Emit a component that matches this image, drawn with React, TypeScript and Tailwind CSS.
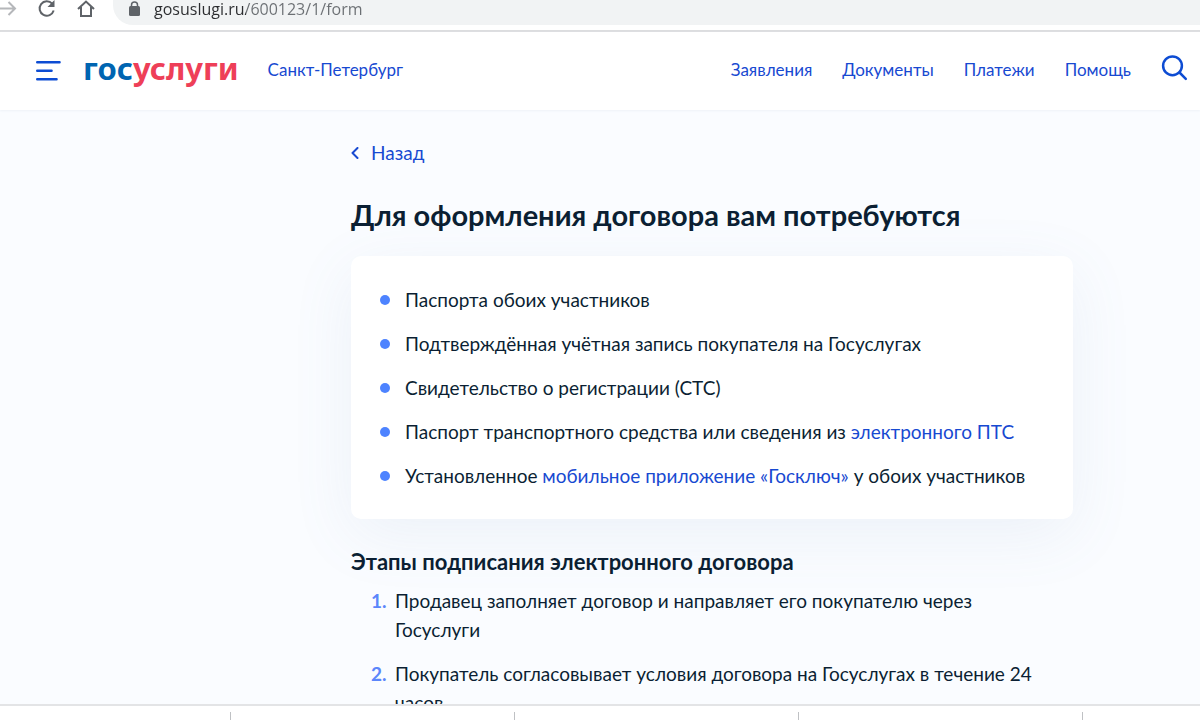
import type { ReactNode } from 'react'

const navLinks = ['Заявления', 'Документы', 'Платежи', 'Помощь']

const requirements: ReactNode[] = [
  'Паспорта обоих участников',
  'Подтверждённая учётная запись покупателя на Госуслугах',
  'Свидетельство о регистрации (СТС)',
  <>
    Паспорт транспортного средства или сведения из{' '}
    <a href="#epts" className="text-[#1749d1]">электронного ПТС</a>
  </>,
  <>
    Установленное{' '}
    <a href="#goskey" className="text-[#1749d1]">мобильное приложение «Госключ»</a>{' '}
    у обоих участников
  </>,
]

const steps = [
  'Продавец заполняет договор и направляет его покупателю через Госуслуги',
  'Покупатель согласовывает условия договора на Госуслугах в течение 24 часов',
]

function BrowserBar() {
  return (
    <div className="flex h-8 shrink-0 items-start border-b-2 border-[#dcdddf] bg-white">
      <button type="button" aria-label="Вперёд" className="w-[36px] text-[#b5b7ba]">
        <svg width="18" height="18" viewBox="0 0 18 18" fill="none" stroke="currentColor" strokeWidth="2">
          <path d="M0 8.500H14.500M8.500 2l6.500 6.500L8.500 15" />
        </svg>
      </button>
      <button type="button" aria-label="Обновить" className="w-[40px] text-[#5f6368]">
        <svg width="22" height="18" viewBox="0 0 22 18" fill="none" stroke="currentColor" strokeWidth="2">
          <path d="M16.200 3.700A7.200 7.200 0 1 0 17.700 10.500" />
          <path d="M18.500 0v7h-7z" fill="currentColor" stroke="none" />
        </svg>
      </button>
      <button type="button" aria-label="Домой" className="w-[37px] text-[#5f6368]">
        <svg width="20" height="18" viewBox="0 0 20 18" fill="none" stroke="currentColor" strokeWidth="2">
          <path d="M2 9L10 1.500 18 9M5 7v9h10V7" />
        </svg>
      </button>
      <div className="flex h-[25px] flex-1 items-start rounded-bl-[20px] bg-[#f1f3f4] pl-4">
        <svg className="mt-px shrink-0 text-[#5f6368]" width="11" height="15" viewBox="0 0 11 15" fill="none">
          <rect y="5" width="11" height="10" rx="1.500" fill="currentColor" />
          <path d="M2.500 6V4a3 3 0 0 1 6 0v2" stroke="currentColor" strokeWidth="1.500" />
        </svg>
        <input
          type="text"
          aria-label="Адресная строка"
          defaultValue="gosuslugi.ru/600123/1/form"
          className="ml-3.5 h-[18px] flex-1 box-content pb-1 bg-[linear-gradient(90deg,#2b2c2f_92px,#6b6f73_92px)] bg-clip-text font-['Open_Sans',sans-serif] text-[16px] leading-[18px] text-transparent outline-none"
        />
      </div>
    </div>
  )
}

function SiteHeader() {
  return (
    <header className="flex h-[78px] shrink-0 items-center bg-white pr-3 pb-0.5 pl-9 shadow-[0_1px_2px_#eef2f8]">
      <button type="button" aria-label="Меню" className="pt-0.5 text-[#0d4cd3]">
        <svg width="25" height="20" viewBox="0 0 25 20" fill="none" stroke="currentColor" strokeWidth="2.400" strokeLinecap="round">
          <path d="M1.200 1.200h22.400M1.200 9.700h14.400M1.200 18.300h19.400" />
        </svg>
      </button>
      <a href="#home" className="ml-[22px] pb-1 font-['Noto_Sans',sans-serif] text-[31px] leading-9 font-bold text-[#0065b1]">
        гос<span className="text-[#ee3f58]">услуги</span>
      </a>
      <a href="#region" className="ml-[29px] text-[17px] text-[#1749d1]">Санкт-Петербург</a>
      <nav className="ml-auto flex gap-[30px] text-[17px] text-[#1749d1]">
        {navLinks.map((link) => (
          <a key={link} href="#nav">{link}</a>
        ))}
      </nav>
      <button type="button" aria-label="Поиск" className="ml-[30px] pb-1 text-[#0d4cd3]">
        <svg width="27" height="26" viewBox="0 0 27 26" fill="none" stroke="currentColor" strokeWidth="2.500" strokeLinecap="round">
          <circle cx="11.500" cy="10.800" r="9.400" />
          <path d="M18.500 17.500l6.300 6.300" />
        </svg>
      </button>
    </header>
  )
}

export default function App() {
  return (
    <div className="flex h-screen flex-col overflow-hidden bg-[#fafcff] font-['Lato',sans-serif] text-[#0b1f33]">
      <BrowserBar />
      <SiteHeader />

      <main className="min-h-0 flex-1 overflow-hidden pt-7 pl-[351px] text-[19px] leading-[29px]">
        <div className="max-w-[722px]">
          <button type="button" className="flex items-center gap-3 text-[#1749d1]">
            <svg width="8" height="12" viewBox="0 0 8 12" fill="none" stroke="currentColor" strokeWidth="2" strokeLinecap="round" strokeLinejoin="round">
              <path d="M6.500 1L1.500 6l5 5" />
            </svg>
            Назад
          </button>

          <h1 className="mt-8 text-[29px] leading-8 font-bold">Для оформления договора вам потребуются</h1>

          <ul className="mt-[25px] flex flex-col gap-[15px] rounded-[10px] bg-white p-[29px] shadow-[0_16px_64px_rgba(105,135,175,0.09)]">
            {requirements.map((item, i) => (
              <li key={i} className="flex items-center gap-[15px]">
                <span className="size-2.5 shrink-0 rounded-full bg-[#4d83ff]" />
                <span>{item}</span>
              </li>
            ))}
          </ul>

          <h2 className="mt-7 text-[22px] leading-[29px] font-bold">Этапы подписания электронного договора</h2>

          <ol className="mt-2.5 flex flex-col gap-[15px] px-5">
            {steps.map((step, i) => (
              <li key={step} className="flex">
                <span className="w-6 shrink-0 font-bold text-[#5b86fb]">{i + 1}.</span>
                <span>{step}</span>
              </li>
            ))}
          </ol>
        </div>
      </main>

      <footer className="flex h-4 shrink-0 items-end border-t-2 border-[#e3e4e6] bg-white pl-[230px]">
        {[1, 2, 3, 4].map((n) => (
          <div key={n} className="h-2 w-[284px] shrink-0 border-l border-[#bfc1c4]" />
        ))}
      </footer>
    </div>
  )
}
